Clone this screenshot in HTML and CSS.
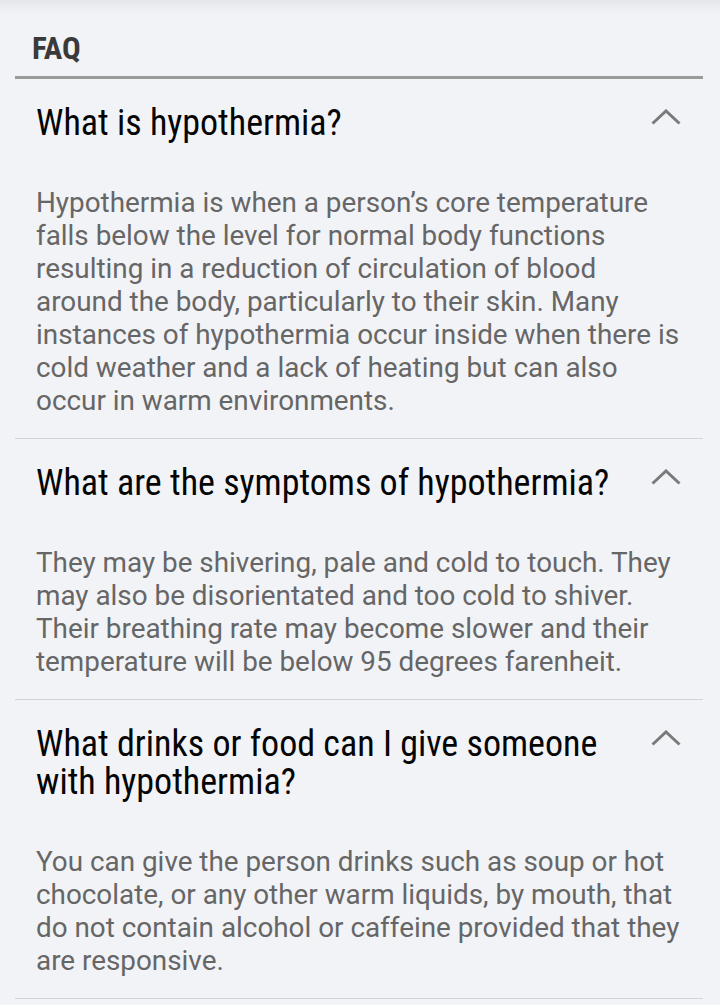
FILE: index.html
```html
<!DOCTYPE html>
<html lang="en">
<head>
<meta charset="utf-8">
<title>FAQ</title>
<link rel="stylesheet" href="styles.css">
</head>
<body>
<div class="top-shade"></div>
<main class="faq">
  <h1 class="faq-title">FAQ</h1>
  <section class="item">
    <div class="question">
      <h2 class="q-text">What is hypothermia?</h2>
      <svg class="chev" width="30" height="16" viewBox="0 0 30 16"><path d="M1.5 14.5 L15 2 L28.5 14.5" fill="none" stroke="#7a7a7a" stroke-width="3"/></svg>
    </div>
    <p class="answer">Hypothermia is when a person’s core temperature falls below the level for normal body functions resulting in a reduction of circulation of blood around the body, particularly to their skin. Many instances of hypothermia occur inside when there is cold weather and a lack of heating but can also occur in warm environments.</p>
  </section>
  <section class="item">
    <div class="question">
      <h2 class="q-text">What are the symptoms of hypothermia?</h2>
      <svg class="chev" width="30" height="16" viewBox="0 0 30 16"><path d="M1.5 14.5 L15 2 L28.5 14.5" fill="none" stroke="#7a7a7a" stroke-width="3"/></svg>
    </div>
    <p class="answer">They may be shivering, pale and cold to touch. They may also be disorientated and too cold to shiver. Their breathing rate may become slower and their temperature will be below 95 degrees farenheit.</p>
  </section>
  <section class="item">
    <div class="question">
      <h2 class="q-text">What drinks or food can I give someone with hypothermia?</h2>
      <svg class="chev" width="30" height="16" viewBox="0 0 30 16"><path d="M1.5 14.5 L15 2 L28.5 14.5" fill="none" stroke="#7a7a7a" stroke-width="3"/></svg>
    </div>
    <p class="answer">You can give the person drinks such as soup or hot chocolate, or any other warm liquids, by mouth, that do not contain alcohol or caffeine provided that they are responsive.</p>
  </section>
</main>
</body>
</html>
```

FILE: styles.css
```css
html, body {
  margin: 0;
  padding: 0;
  background: #f2f3f7;
}

body {
  font-family: Roboto, "Noto Sans", sans-serif;
  position: relative;
  height: 1005px;
  overflow: hidden;
}

.top-shade {
  position: absolute;
  left: 0;
  top: 0;
  right: 0;
  height: 14px;
  background: linear-gradient(#e6e7eb, #f2f3f7);
}

.faq {
  position: relative;
  margin: 0 17px 0 15px;
}

.faq-title {
  margin: 0;
  padding: 34px 0 12px 17px;
  font-size: 31px;
  line-height: 30px;
  font-weight: 700;
  color: #3a3a3a;
  font-family: "Roboto Condensed", Roboto, sans-serif;
  border-bottom: 3px solid #9a9a9a;
}

.item {
  border-bottom: 1px solid #d3d3d7;
  padding: 0 22px 0 21px;
}

.question {
  display: flex;
  align-items: flex-start;
  justify-content: space-between;
  padding-top: 25px;
}

.q-text {
  margin: 0;
  font-family: "Roboto Condensed", Roboto, sans-serif;
  font-weight: 400;
  font-size: 36px;
  line-height: 38px;
  color: #050505;
  max-width: 590px;
}

.chev {
  flex: none;
  margin-top: 5px;
}

.answer {
  margin: 44px -3px 0 0;
  padding-bottom: 21px;
  font-size: 27.85px;
  line-height: 33px;
  color: #666666;
}
```
